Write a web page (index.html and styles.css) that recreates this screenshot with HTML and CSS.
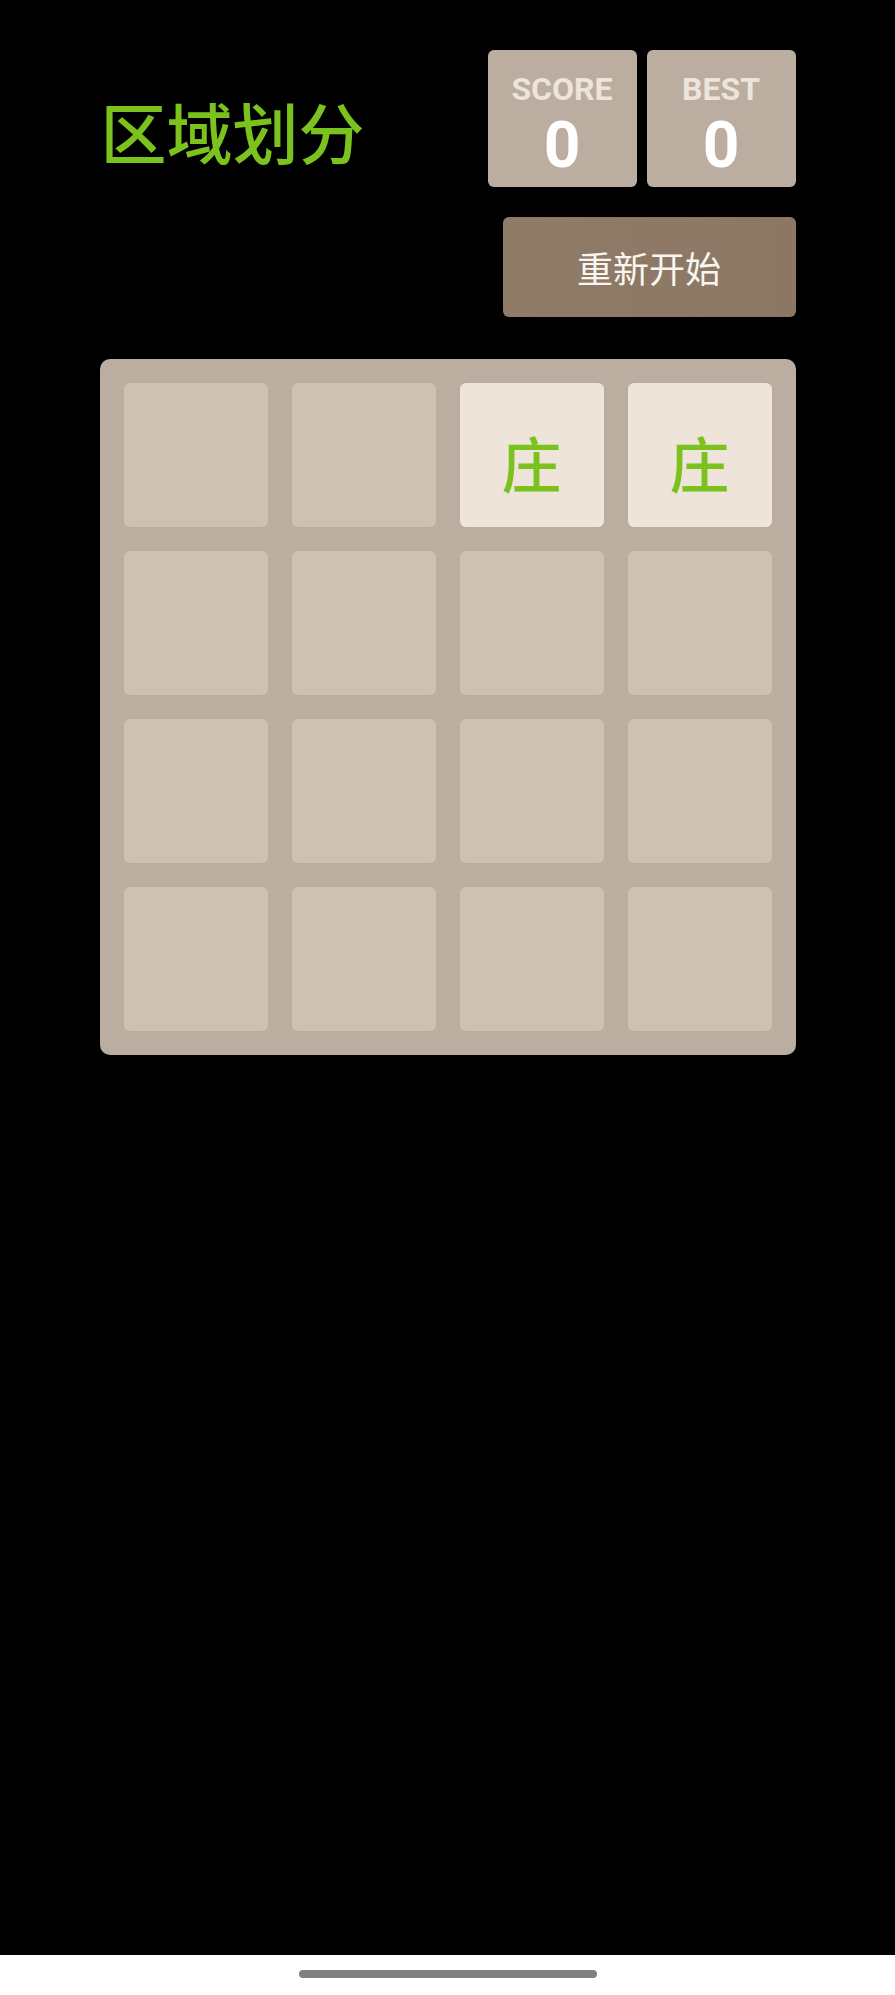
FILE: index.html
```html
<html>
<head><title>区域划分</title>
<meta name="viewport" content="width=device-width, initial-scale=1.0, maximum-scale=1.0, user-scalable=no" />
<meta content="text/html;charset=utf-8" http-equiv="Content-Type" />
<link rel="stylesheet" href="styles.css">
</head>
<body>

<div class="page">
	<div class="container">
		<div class="header">
			<h1 class="title">区域划分</h1>
			<div class="scores">
				<div class="score-box">
					<div class="score-label">SCORE</div>
					<div class="score-value">0</div>
				</div>
				<div class="score-box">
					<div class="score-label">BEST</div>
					<div class="score-value">0</div>
				</div>
			</div>
		</div>
		<div class="actions">
			<button class="restart">重新开始</button>
		</div>
		<div class="board">
			<div class="cell"></div>
			<div class="cell"></div>
			<div class="cell tile">庄</div>
			<div class="cell tile">庄</div>
			<div class="cell"></div>
			<div class="cell"></div>
			<div class="cell"></div>
			<div class="cell"></div>
			<div class="cell"></div>
			<div class="cell"></div>
			<div class="cell"></div>
			<div class="cell"></div>
			<div class="cell"></div>
			<div class="cell"></div>
			<div class="cell"></div>
			<div class="cell"></div>
		</div>
	</div>
</div>

<div class="navbar"><div class="handle"></div></div>

</body>
</html>
```

FILE: styles.css
```css
body{
	padding:0;
	margin:0;
	background-color:#000;
	height:100vh;
	display:flex;
	flex-direction:column;
	font-family: "Noto Sans CJK SC", "Noto Sans", sans-serif;
}

.page{
	flex:1;
}

.container{
	width:696px;
	margin:0 auto;
}

.header{
	display:flex;
	justify-content:space-between;
	align-items:flex-start;
	padding-top:50px;
}

.title{
	margin:47px 0 0 1px;
	font-size:66px;
	line-height:66px;
	font-weight:500;
	color:#7bc21e;
}

.scores{
	display:flex;
	gap:10px;
}

.score-box{
	width:149px;
	height:137px;
	box-sizing:border-box;
	padding-top:23px;
	background-color:#bbada0;
	border-radius:6px;
	text-align:center;
	font-family: Roboto, "Liberation Sans", sans-serif;
	font-weight:bold;
}

.score-label{
	font-size:32px;
	line-height:32px;
	color:#eee4da;
}

.score-value{
	margin-top:9px;
	font-size:64px;
	line-height:64px;
	color:#fff;
}

.actions{
	display:flex;
	justify-content:flex-end;
	margin-top:30px;
}

.restart{
	width:293px;
	height:100px;
	border:0;
	border-radius:6px;
	background:linear-gradient(90deg, #8f7b67, #8b7763);
	color:#f9f6f2;
	font-family: "Noto Sans CJK SC", sans-serif;
	font-size:36px;
	padding:0;
	cursor:pointer;
}

.board{
	margin-top:42px;
	padding:24px;
	display:grid;
	grid-template-columns:repeat(4, 144px);
	grid-auto-rows:144px;
	gap:24px;
	background-color:#bbada0;
	border-radius:10px;
}

.cell{
	background-color:#cdc1b4;
	border-radius:6px;
}

.tile{
	background-color:#eee4da;
	display:flex;
	justify-content:center;
	align-items:center;
	box-sizing:border-box;
	padding-top:14px;
	font-size:60px;
	line-height:60px;
	font-weight:500;
	color:#7bc21e;
}

.navbar{
	height:40px;
	background-color:#fff;
	display:flex;
	justify-content:center;
	padding-top:15px;
	box-sizing:border-box;
}

.handle{
	width:298px;
	height:8px;
	border-radius:4px;
	background-color:#808080;
}
```
